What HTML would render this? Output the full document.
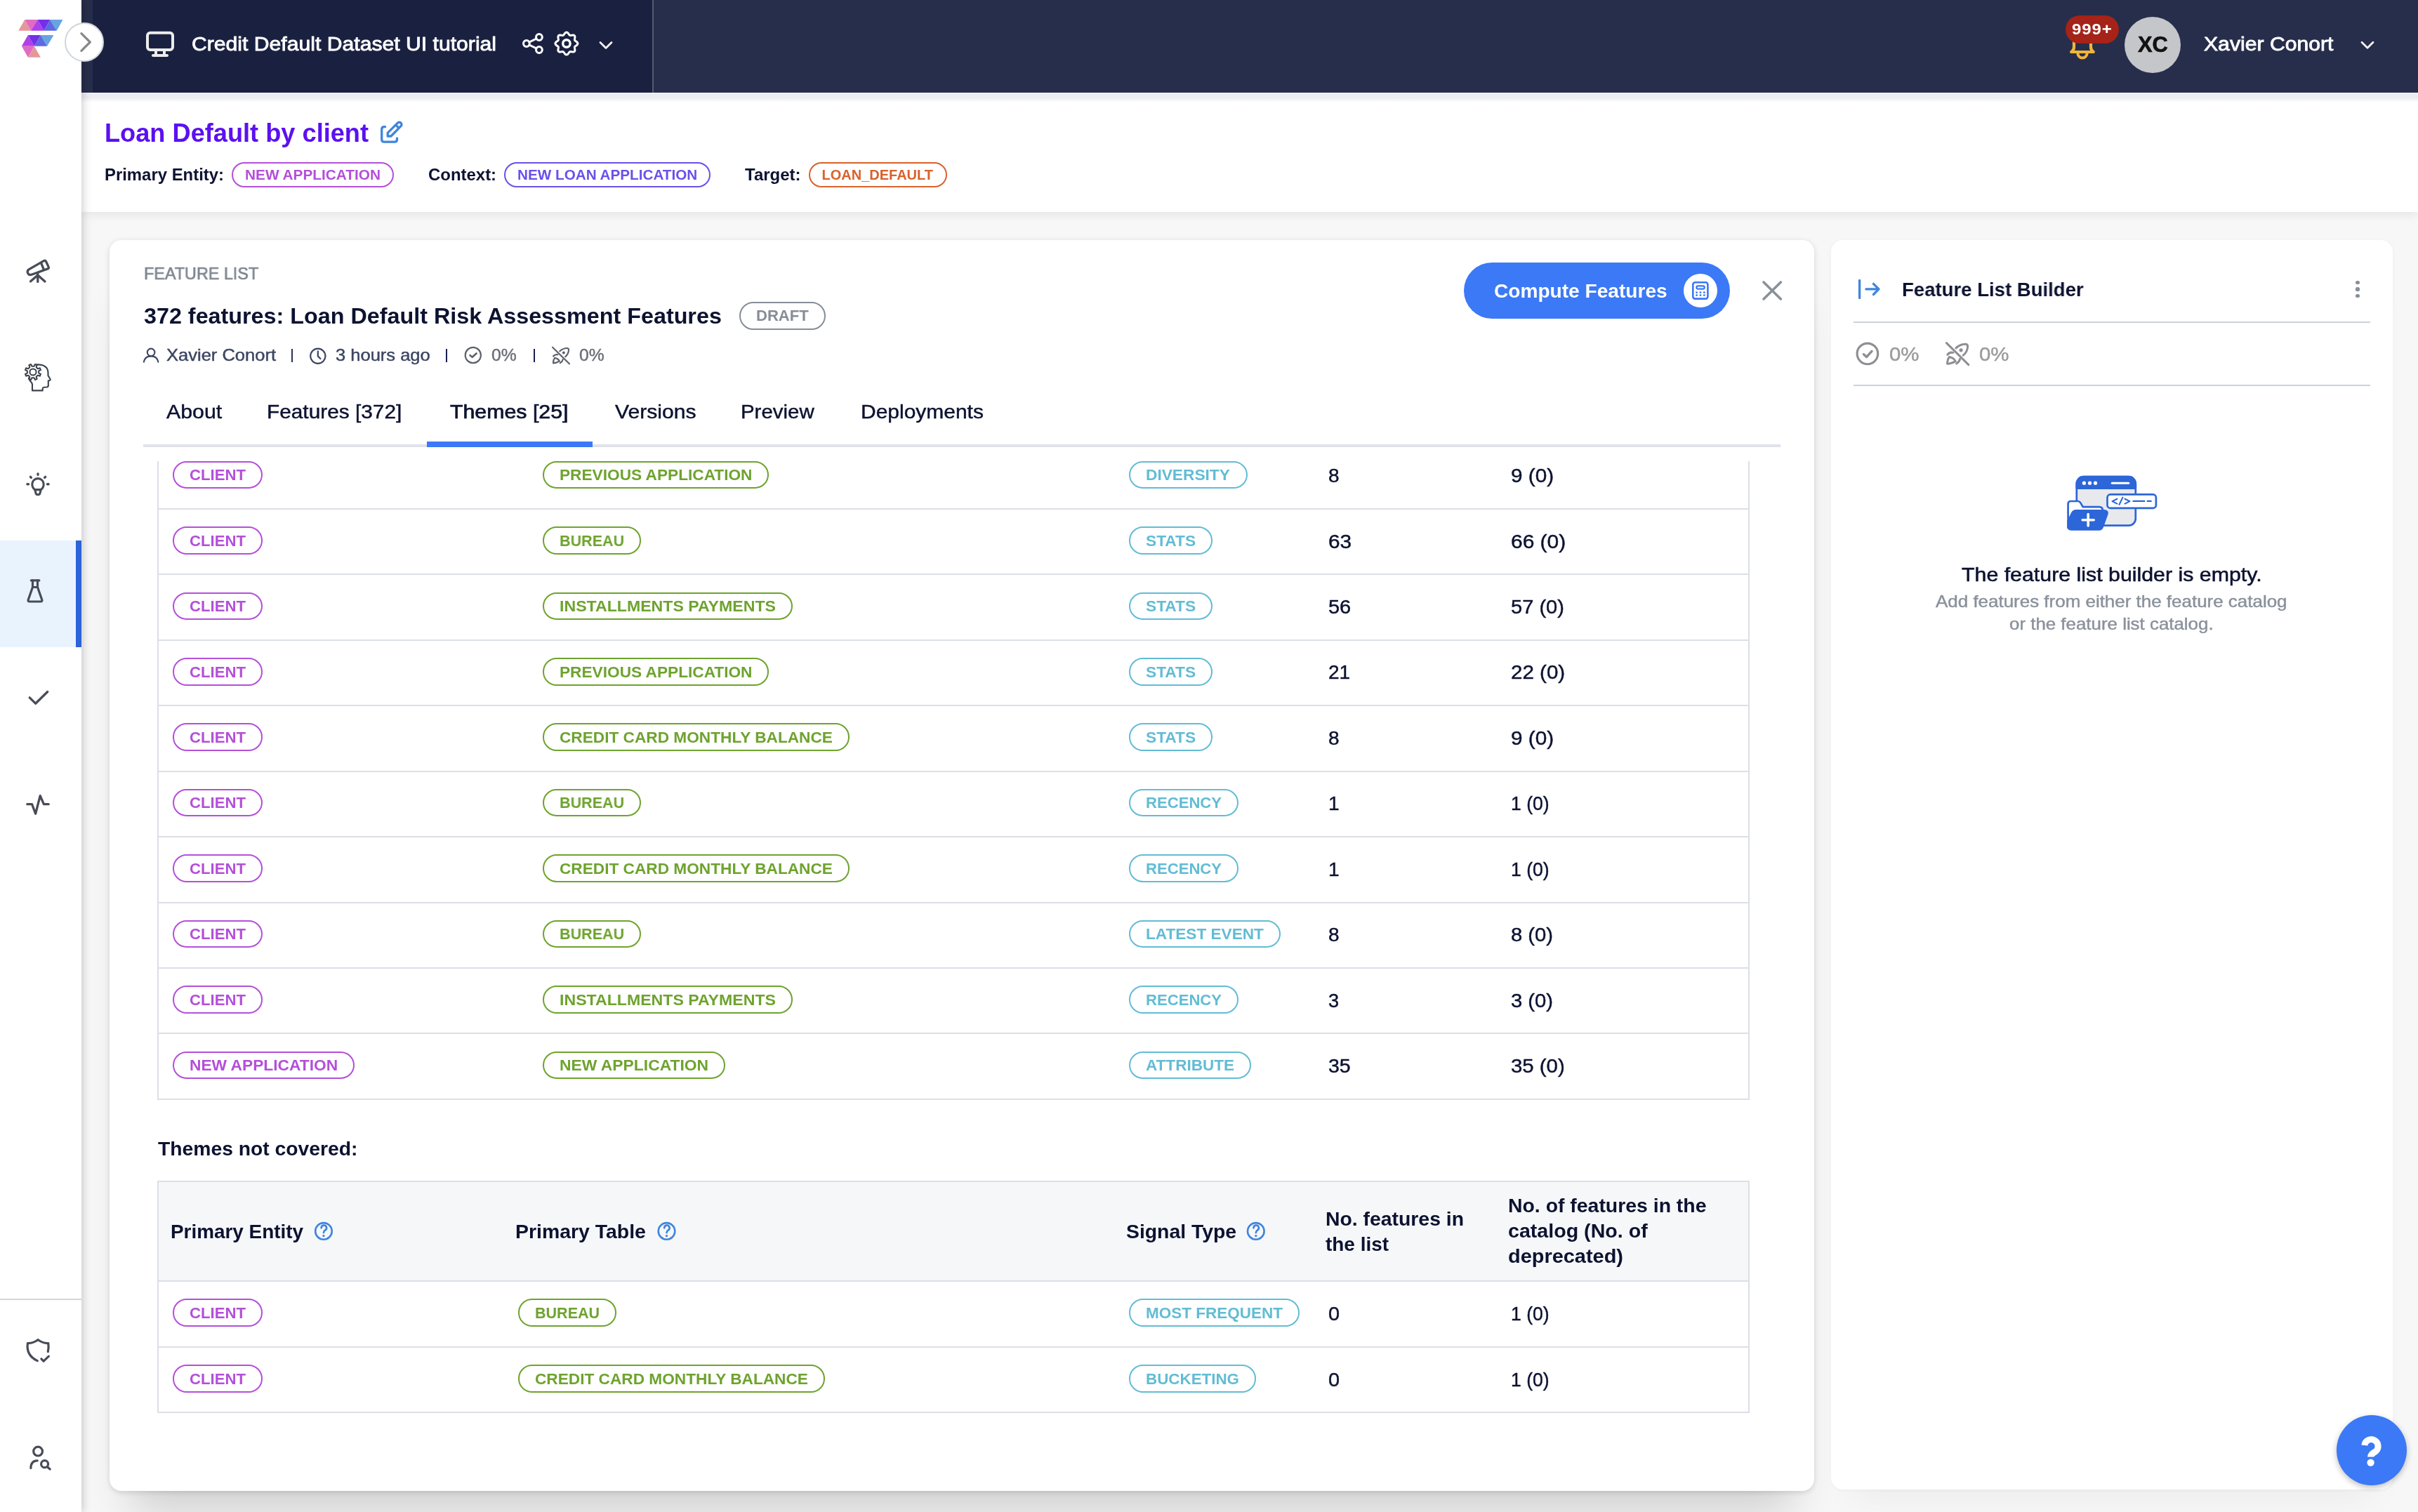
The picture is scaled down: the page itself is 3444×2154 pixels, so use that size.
<!DOCTYPE html>
<html><head><meta charset="utf-8"><title>Feature List</title>
<style>
html,body{margin:0;padding:0;}
body{-webkit-font-smoothing:antialiased;width:3444px;height:2154px;position:relative;overflow:hidden;background:#f7f7f7;font-family:"Liberation Sans",sans-serif;}
.a{position:absolute;}
.t{position:absolute;white-space:nowrap;font-family:"Liberation Sans",sans-serif;}
svg{position:absolute;overflow:visible;}
</style></head><body><div id="root" style="position:absolute;left:0;top:0;width:3444px;height:2154px;will-change:transform;">
<div class="a" style="left:116px;top:132px;width:3328px;height:170px;background:#ffffff;box-shadow:0 4px 14px rgba(0,0,0,0.08);"></div>
<div class="a" style="left:156px;top:342px;width:2428px;height:1782px;background:#ffffff;border-radius:17px;box-shadow:0 60px 60px -30px rgba(0,0,0,0.16),0 2px 8px rgba(0,0,0,0.14);"></div>
<div class="a" style="left:2608px;top:342px;width:800px;height:1780px;background:#ffffff;border-radius:17px;box-shadow:0 40px 50px -30px rgba(0,0,0,0.055),0 1px 6px rgba(0,0,0,0.045);"></div>
<div class="a" style="left:116px;top:132px;width:3328px;height:14px;background:linear-gradient(to bottom,#fafafa 0,#fafafa 1.3px,#ecedf1 1.4px,#ecedf1 7px,#ffffff 14px);"></div>
<div class="a" style="left:116px;top:0px;width:3328px;height:132px;background:#272e4b;"></div>
<div class="a" style="left:132px;top:0px;width:797px;height:132px;background:#1a2140;"></div>
<div class="a" style="left:929px;top:0px;width:2px;height:132px;background:#555a70;"></div>
<span class="t" style="left:273.00px;top:49.30px;font-size:28px;line-height:28px;color:#ffffff;transform:scaleX(1.0769);transform-origin:0 0;-webkit-text-stroke:0.8px #ffffff;">Credit Default Dataset UI tutorial</span>
<div class="a" style="left:3026px;top:24px;width:80px;height:80px;background:#c5c6ca;border-radius:50%;"></div>
<span class="t" style="left:3044.50px;top:47.41px;font-size:32px;line-height:32px;color:#111111;font-weight:700;transform:scaleX(0.9663);transform-origin:0 0;-webkit-text-stroke:0.6px #111111;">XC</span>
<span class="t" style="left:3139.00px;top:49.30px;font-size:28px;line-height:28px;color:#ffffff;transform:scaleX(1.0774);transform-origin:0 0;-webkit-text-stroke:0.8px #ffffff;">Xavier Conort</span>
<div class="a" style="left:0px;top:0px;width:116px;height:2154px;background:#ffffff;box-shadow:2px 0 12px rgba(0,0,0,0.20);"></div>
<div class="a" style="left:0px;top:770px;width:116px;height:152px;background:#e9f3fe;"></div>
<div class="a" style="left:108px;top:770px;width:8px;height:152px;background:#2b63d9;"></div>
<div class="a" style="left:0px;top:1850px;width:116px;height:2px;background:#d3d7dc;"></div>
<div class="a" style="left:92px;top:32px;width:56px;height:56px;background:#ffffff;border-radius:50%;box-sizing:border-box;border:2px solid #cfd5da;"></div>
<span class="t" style="left:149.00px;top:171.53px;font-size:36px;line-height:36px;color:#5b10f0;font-weight:700;transform:scaleX(1.0053);transform-origin:0 0;">Loan Default by client</span>
<span class="t" style="left:149.00px;top:237.18px;font-size:24px;line-height:24px;color:#0c1230;font-weight:700;transform:scaleX(0.9956);transform-origin:0 0;">Primary Entity:</span>
<div class="a" style="left:330px;top:231px;width:231px;height:36px;border:2px solid #b44fd9;border-radius:18.0px;box-sizing:border-box;background:transparent"></div>
<span class="t" style="left:348.60px;top:239.07px;font-size:20px;line-height:20px;color:#b44fd9;font-weight:700;transform:scaleX(1.0404);transform-origin:0 0;">NEW APPLICATION</span>
<span class="t" style="left:609.70px;top:237.18px;font-size:24px;line-height:24px;color:#0c1230;font-weight:700;transform:scaleX(0.9974);transform-origin:0 0;">Context:</span>
<div class="a" style="left:718px;top:231px;width:294px;height:36px;border:2px solid #6b50ea;border-radius:18.0px;box-sizing:border-box;background:transparent"></div>
<span class="t" style="left:736.80px;top:239.07px;font-size:20px;line-height:20px;color:#6b50ea;font-weight:700;transform:scaleX(1.0341);transform-origin:0 0;">NEW LOAN APPLICATION</span>
<span class="t" style="left:1061.00px;top:237.18px;font-size:24px;line-height:24px;color:#0c1230;font-weight:700;">Target:</span>
<div class="a" style="left:1152px;top:231px;width:197px;height:36px;border:2px solid #d9622b;border-radius:18.0px;box-sizing:border-box;background:transparent"></div>
<span class="t" style="left:1170.50px;top:239.07px;font-size:20px;line-height:20px;color:#d9622b;font-weight:700;">LOAN_DEFAULT</span>
<span class="t" style="left:205.00px;top:377.68px;font-size:24px;line-height:24px;color:#7f8792;transform:scaleX(0.9731);transform-origin:0 0;-webkit-text-stroke:0.7px #7f8792;">FEATURE LIST</span>
<span class="t" style="left:205.00px;top:433.91px;font-size:32px;line-height:32px;color:#0c1230;font-weight:700;transform:scaleX(1.0095);transform-origin:0 0;">372 features: Loan Default Risk Assessment Features</span>
<div class="a" style="left:1053px;top:430px;width:123px;height:40px;border:2px solid #868d98;border-radius:20.0px;box-sizing:border-box;background:transparent"></div>
<span class="t" style="left:1077.00px;top:439.38px;font-size:22px;line-height:22px;color:#868d98;font-weight:700;transform:scaleX(1.0027);transform-origin:0 0;">DRAFT</span>
<span class="t" style="left:237.00px;top:493.68px;font-size:24px;line-height:24px;color:#3c4562;transform:scaleX(1.0630);transform-origin:0 0;-webkit-text-stroke:0.45px #3c4562;">Xavier Conort</span>
<span class="t" style="left:478.00px;top:493.68px;font-size:24px;line-height:24px;color:#3c4562;transform:scaleX(1.0627);transform-origin:0 0;-webkit-text-stroke:0.45px #3c4562;">3 hours ago</span>
<span class="t" style="left:700.00px;top:493.68px;font-size:24px;line-height:24px;color:#6b6f78;transform:scaleX(1.0273);transform-origin:0 0;-webkit-text-stroke:0.45px #6b6f78;">0%</span>
<span class="t" style="left:824.60px;top:493.68px;font-size:24px;line-height:24px;color:#6b6f78;transform:scaleX(1.0273);transform-origin:0 0;-webkit-text-stroke:0.45px #6b6f78;">0%</span>
<div class="a" style="left:2085px;top:374px;width:379px;height:80px;background:#3b79f6;border-radius:40px;"></div>
<span class="t" style="left:2128.40px;top:400.50px;font-size:28px;line-height:28px;color:#ffffff;font-weight:700;transform:scaleX(1.0035);transform-origin:0 0;">Compute Features</span>
<div class="a" style="left:2398px;top:390px;width:48px;height:48px;background:#ffffff;border-radius:50%;"></div>
<span class="t" style="left:237.00px;top:573.30px;font-size:28px;line-height:28px;color:#0c1230;transform:scaleX(1.0826);transform-origin:0 0;-webkit-text-stroke:0.45px #0c1230;">About</span>
<span class="t" style="left:379.90px;top:573.30px;font-size:28px;line-height:28px;color:#0c1230;transform:scaleX(1.0648);transform-origin:0 0;-webkit-text-stroke:0.45px #0c1230;">Features [372]</span>
<span class="t" style="left:641.00px;top:573.30px;font-size:28px;line-height:28px;color:#0c1230;transform:scaleX(1.0825);transform-origin:0 0;-webkit-text-stroke:0.7px #0c1230;">Themes [25]</span>
<span class="t" style="left:875.50px;top:573.30px;font-size:28px;line-height:28px;color:#0c1230;transform:scaleX(1.0772);transform-origin:0 0;-webkit-text-stroke:0.45px #0c1230;">Versions</span>
<span class="t" style="left:1054.90px;top:573.30px;font-size:28px;line-height:28px;color:#0c1230;transform:scaleX(1.0506);transform-origin:0 0;-webkit-text-stroke:0.45px #0c1230;">Preview</span>
<span class="t" style="left:1225.80px;top:573.30px;font-size:28px;line-height:28px;color:#0c1230;transform:scaleX(1.0703);transform-origin:0 0;-webkit-text-stroke:0.45px #0c1230;">Deployments</span>
<div class="a" style="left:204px;top:633px;width:2332px;height:4px;background:#dfe2e9;"></div>
<div class="a" style="left:608px;top:629px;width:236px;height:8px;background:#3b79f6;"></div>
<div class="a" style="left:224px;top:657px;width:2px;height:909.8px;background:#dcdfe7;"></div>
<div class="a" style="left:2490px;top:657px;width:2px;height:909.8px;background:#dcdfe7;"></div>
<div class="a" style="left:224px;top:724px;width:2268px;height:2px;background:#dcdfe7;"></div>
<div class="a" style="left:224px;top:817px;width:2268px;height:2px;background:#dcdfe7;"></div>
<div class="a" style="left:224px;top:911px;width:2268px;height:2px;background:#dcdfe7;"></div>
<div class="a" style="left:224px;top:1004px;width:2268px;height:2px;background:#dcdfe7;"></div>
<div class="a" style="left:224px;top:1098px;width:2268px;height:2px;background:#dcdfe7;"></div>
<div class="a" style="left:224px;top:1191px;width:2268px;height:2px;background:#dcdfe7;"></div>
<div class="a" style="left:224px;top:1285px;width:2268px;height:2px;background:#dcdfe7;"></div>
<div class="a" style="left:224px;top:1378px;width:2268px;height:2px;background:#dcdfe7;"></div>
<div class="a" style="left:224px;top:1471px;width:2268px;height:2px;background:#dcdfe7;"></div>
<div class="a" style="left:224px;top:1565px;width:2268px;height:2px;background:#dcdfe7;"></div>
<div class="a" style="left:246.3px;top:656.7px;width:128px;height:39.7px;border:2px solid #b44fd9;border-radius:19.85px;box-sizing:border-box;background:transparent"></div>
<span class="t" style="left:270.20px;top:666.38px;font-size:22px;line-height:22px;color:#b44fd9;font-weight:700;transform:scaleX(1.0063);transform-origin:0 0;">CLIENT</span>
<div class="a" style="left:773.2px;top:656.7px;width:322px;height:39.7px;border:2px solid #6ea32e;border-radius:19.85px;box-sizing:border-box;background:transparent"></div>
<span class="t" style="left:797.40px;top:666.38px;font-size:22px;line-height:22px;color:#6ea32e;font-weight:700;transform:scaleX(1.0300);transform-origin:0 0;">PREVIOUS APPLICATION</span>
<div class="a" style="left:1608.3px;top:656.7px;width:169px;height:39.7px;border:2px solid #62bcd4;border-radius:19.85px;box-sizing:border-box;background:transparent"></div>
<span class="t" style="left:1631.70px;top:666.38px;font-size:22px;line-height:22px;color:#62bcd4;font-weight:700;transform:scaleX(1.0323);transform-origin:0 0;">DIVERSITY</span>
<span class="t" style="left:1892.00px;top:664.20px;font-size:28px;line-height:28px;color:#0c1230;-webkit-text-stroke:0.45px #0c1230;">8</span>
<span class="t" style="left:2152.20px;top:664.20px;font-size:28px;line-height:28px;color:#0c1230;transform:scaleX(1.0609);transform-origin:0 0;-webkit-text-stroke:0.45px #0c1230;">9 (0)</span>
<div class="a" style="left:246.3px;top:750.1px;width:128px;height:39.7px;border:2px solid #b44fd9;border-radius:19.85px;box-sizing:border-box;background:transparent"></div>
<span class="t" style="left:270.20px;top:759.80px;font-size:22px;line-height:22px;color:#b44fd9;font-weight:700;transform:scaleX(1.0063);transform-origin:0 0;">CLIENT</span>
<div class="a" style="left:773.2px;top:750.1px;width:140px;height:39.7px;border:2px solid #6ea32e;border-radius:19.85px;box-sizing:border-box;background:transparent"></div>
<span class="t" style="left:797.40px;top:759.80px;font-size:22px;line-height:22px;color:#6ea32e;font-weight:700;transform:scaleX(0.9787);transform-origin:0 0;">BUREAU</span>
<div class="a" style="left:1608.3px;top:750.1px;width:119px;height:39.7px;border:2px solid #62bcd4;border-radius:19.85px;box-sizing:border-box;background:transparent"></div>
<span class="t" style="left:1631.70px;top:759.80px;font-size:22px;line-height:22px;color:#62bcd4;font-weight:700;transform:scaleX(1.0327);transform-origin:0 0;">STATS</span>
<span class="t" style="left:1892.00px;top:757.62px;font-size:28px;line-height:28px;color:#0c1230;transform:scaleX(1.0624);transform-origin:0 0;-webkit-text-stroke:0.45px #0c1230;">63</span>
<span class="t" style="left:2152.20px;top:757.62px;font-size:28px;line-height:28px;color:#0c1230;transform:scaleX(1.0689);transform-origin:0 0;-webkit-text-stroke:0.45px #0c1230;">66 (0)</span>
<div class="a" style="left:246.3px;top:843.5px;width:128px;height:39.7px;border:2px solid #b44fd9;border-radius:19.85px;box-sizing:border-box;background:transparent"></div>
<span class="t" style="left:270.20px;top:853.22px;font-size:22px;line-height:22px;color:#b44fd9;font-weight:700;transform:scaleX(1.0063);transform-origin:0 0;">CLIENT</span>
<div class="a" style="left:773.2px;top:843.5px;width:356px;height:39.7px;border:2px solid #6ea32e;border-radius:19.85px;box-sizing:border-box;background:transparent"></div>
<span class="t" style="left:797.40px;top:853.22px;font-size:22px;line-height:22px;color:#6ea32e;font-weight:700;transform:scaleX(1.0512);transform-origin:0 0;">INSTALLMENTS PAYMENTS</span>
<div class="a" style="left:1608.3px;top:843.5px;width:119px;height:39.7px;border:2px solid #62bcd4;border-radius:19.85px;box-sizing:border-box;background:transparent"></div>
<span class="t" style="left:1631.70px;top:853.22px;font-size:22px;line-height:22px;color:#62bcd4;font-weight:700;transform:scaleX(1.0327);transform-origin:0 0;">STATS</span>
<span class="t" style="left:1892.00px;top:851.04px;font-size:28px;line-height:28px;color:#0c1230;transform:scaleX(1.0336);transform-origin:0 0;-webkit-text-stroke:0.45px #0c1230;">56</span>
<span class="t" style="left:2152.20px;top:851.04px;font-size:28px;line-height:28px;color:#0c1230;transform:scaleX(1.0375);transform-origin:0 0;-webkit-text-stroke:0.45px #0c1230;">57 (0)</span>
<div class="a" style="left:246.3px;top:937.0px;width:128px;height:39.7px;border:2px solid #b44fd9;border-radius:19.85px;box-sizing:border-box;background:transparent"></div>
<span class="t" style="left:270.20px;top:946.64px;font-size:22px;line-height:22px;color:#b44fd9;font-weight:700;transform:scaleX(1.0063);transform-origin:0 0;">CLIENT</span>
<div class="a" style="left:773.2px;top:937.0px;width:322px;height:39.7px;border:2px solid #6ea32e;border-radius:19.85px;box-sizing:border-box;background:transparent"></div>
<span class="t" style="left:797.40px;top:946.64px;font-size:22px;line-height:22px;color:#6ea32e;font-weight:700;transform:scaleX(1.0300);transform-origin:0 0;">PREVIOUS APPLICATION</span>
<div class="a" style="left:1608.3px;top:937.0px;width:119px;height:39.7px;border:2px solid #62bcd4;border-radius:19.85px;box-sizing:border-box;background:transparent"></div>
<span class="t" style="left:1631.70px;top:946.64px;font-size:22px;line-height:22px;color:#62bcd4;font-weight:700;transform:scaleX(1.0327);transform-origin:0 0;">STATS</span>
<span class="t" style="left:1892.00px;top:944.46px;font-size:28px;line-height:28px;color:#0c1230;-webkit-text-stroke:0.45px #0c1230;">21</span>
<span class="t" style="left:2152.20px;top:944.46px;font-size:28px;line-height:28px;color:#0c1230;transform:scaleX(1.0553);transform-origin:0 0;-webkit-text-stroke:0.45px #0c1230;">22 (0)</span>
<div class="a" style="left:246.3px;top:1030.4px;width:128px;height:39.7px;border:2px solid #b44fd9;border-radius:19.85px;box-sizing:border-box;background:transparent"></div>
<span class="t" style="left:270.20px;top:1040.06px;font-size:22px;line-height:22px;color:#b44fd9;font-weight:700;transform:scaleX(1.0063);transform-origin:0 0;">CLIENT</span>
<div class="a" style="left:773.2px;top:1030.4px;width:437px;height:39.7px;border:2px solid #6ea32e;border-radius:19.85px;box-sizing:border-box;background:transparent"></div>
<span class="t" style="left:797.40px;top:1040.06px;font-size:22px;line-height:22px;color:#6ea32e;font-weight:700;transform:scaleX(1.0298);transform-origin:0 0;">CREDIT CARD MONTHLY BALANCE</span>
<div class="a" style="left:1608.3px;top:1030.4px;width:119px;height:39.7px;border:2px solid #62bcd4;border-radius:19.85px;box-sizing:border-box;background:transparent"></div>
<span class="t" style="left:1631.70px;top:1040.06px;font-size:22px;line-height:22px;color:#62bcd4;font-weight:700;transform:scaleX(1.0327);transform-origin:0 0;">STATS</span>
<span class="t" style="left:1892.00px;top:1037.88px;font-size:28px;line-height:28px;color:#0c1230;-webkit-text-stroke:0.45px #0c1230;">8</span>
<span class="t" style="left:2152.20px;top:1037.88px;font-size:28px;line-height:28px;color:#0c1230;transform:scaleX(1.0609);transform-origin:0 0;-webkit-text-stroke:0.45px #0c1230;">9 (0)</span>
<div class="a" style="left:246.3px;top:1123.8px;width:128px;height:39.7px;border:2px solid #b44fd9;border-radius:19.85px;box-sizing:border-box;background:transparent"></div>
<span class="t" style="left:270.20px;top:1133.48px;font-size:22px;line-height:22px;color:#b44fd9;font-weight:700;transform:scaleX(1.0063);transform-origin:0 0;">CLIENT</span>
<div class="a" style="left:773.2px;top:1123.8px;width:140px;height:39.7px;border:2px solid #6ea32e;border-radius:19.85px;box-sizing:border-box;background:transparent"></div>
<span class="t" style="left:797.40px;top:1133.48px;font-size:22px;line-height:22px;color:#6ea32e;font-weight:700;transform:scaleX(0.9787);transform-origin:0 0;">BUREAU</span>
<div class="a" style="left:1608.3px;top:1123.8px;width:156px;height:39.7px;border:2px solid #62bcd4;border-radius:19.85px;box-sizing:border-box;background:transparent"></div>
<span class="t" style="left:1631.70px;top:1133.48px;font-size:22px;line-height:22px;color:#62bcd4;font-weight:700;transform:scaleX(1.0047);transform-origin:0 0;">RECENCY</span>
<span class="t" style="left:1892.00px;top:1131.30px;font-size:28px;line-height:28px;color:#0c1230;-webkit-text-stroke:0.45px #0c1230;">1</span>
<span class="t" style="left:2152.20px;top:1131.30px;font-size:28px;line-height:28px;color:#0c1230;transform:scaleX(0.9478);transform-origin:0 0;-webkit-text-stroke:0.45px #0c1230;">1 (0)</span>
<div class="a" style="left:246.3px;top:1217.2px;width:128px;height:39.7px;border:2px solid #b44fd9;border-radius:19.85px;box-sizing:border-box;background:transparent"></div>
<span class="t" style="left:270.20px;top:1226.90px;font-size:22px;line-height:22px;color:#b44fd9;font-weight:700;transform:scaleX(1.0063);transform-origin:0 0;">CLIENT</span>
<div class="a" style="left:773.2px;top:1217.2px;width:437px;height:39.7px;border:2px solid #6ea32e;border-radius:19.85px;box-sizing:border-box;background:transparent"></div>
<span class="t" style="left:797.40px;top:1226.90px;font-size:22px;line-height:22px;color:#6ea32e;font-weight:700;transform:scaleX(1.0298);transform-origin:0 0;">CREDIT CARD MONTHLY BALANCE</span>
<div class="a" style="left:1608.3px;top:1217.2px;width:156px;height:39.7px;border:2px solid #62bcd4;border-radius:19.85px;box-sizing:border-box;background:transparent"></div>
<span class="t" style="left:1631.70px;top:1226.90px;font-size:22px;line-height:22px;color:#62bcd4;font-weight:700;transform:scaleX(1.0047);transform-origin:0 0;">RECENCY</span>
<span class="t" style="left:1892.00px;top:1224.72px;font-size:28px;line-height:28px;color:#0c1230;-webkit-text-stroke:0.45px #0c1230;">1</span>
<span class="t" style="left:2152.20px;top:1224.72px;font-size:28px;line-height:28px;color:#0c1230;transform:scaleX(0.9478);transform-origin:0 0;-webkit-text-stroke:0.45px #0c1230;">1 (0)</span>
<div class="a" style="left:246.3px;top:1310.6px;width:128px;height:39.7px;border:2px solid #b44fd9;border-radius:19.85px;box-sizing:border-box;background:transparent"></div>
<span class="t" style="left:270.20px;top:1320.32px;font-size:22px;line-height:22px;color:#b44fd9;font-weight:700;transform:scaleX(1.0063);transform-origin:0 0;">CLIENT</span>
<div class="a" style="left:773.2px;top:1310.6px;width:140px;height:39.7px;border:2px solid #6ea32e;border-radius:19.85px;box-sizing:border-box;background:transparent"></div>
<span class="t" style="left:797.40px;top:1320.32px;font-size:22px;line-height:22px;color:#6ea32e;font-weight:700;transform:scaleX(0.9787);transform-origin:0 0;">BUREAU</span>
<div class="a" style="left:1608.3px;top:1310.6px;width:216px;height:39.7px;border:2px solid #62bcd4;border-radius:19.85px;box-sizing:border-box;background:transparent"></div>
<span class="t" style="left:1631.70px;top:1320.32px;font-size:22px;line-height:22px;color:#62bcd4;font-weight:700;transform:scaleX(1.0275);transform-origin:0 0;">LATEST EVENT</span>
<span class="t" style="left:1892.00px;top:1318.14px;font-size:28px;line-height:28px;color:#0c1230;-webkit-text-stroke:0.45px #0c1230;">8</span>
<span class="t" style="left:2152.20px;top:1318.14px;font-size:28px;line-height:28px;color:#0c1230;transform:scaleX(1.0435);transform-origin:0 0;-webkit-text-stroke:0.45px #0c1230;">8 (0)</span>
<div class="a" style="left:246.3px;top:1404.1px;width:128px;height:39.7px;border:2px solid #b44fd9;border-radius:19.85px;box-sizing:border-box;background:transparent"></div>
<span class="t" style="left:270.20px;top:1413.74px;font-size:22px;line-height:22px;color:#b44fd9;font-weight:700;transform:scaleX(1.0063);transform-origin:0 0;">CLIENT</span>
<div class="a" style="left:773.2px;top:1404.1px;width:356px;height:39.7px;border:2px solid #6ea32e;border-radius:19.85px;box-sizing:border-box;background:transparent"></div>
<span class="t" style="left:797.40px;top:1413.74px;font-size:22px;line-height:22px;color:#6ea32e;font-weight:700;transform:scaleX(1.0512);transform-origin:0 0;">INSTALLMENTS PAYMENTS</span>
<div class="a" style="left:1608.3px;top:1404.1px;width:156px;height:39.7px;border:2px solid #62bcd4;border-radius:19.85px;box-sizing:border-box;background:transparent"></div>
<span class="t" style="left:1631.70px;top:1413.74px;font-size:22px;line-height:22px;color:#62bcd4;font-weight:700;transform:scaleX(1.0047);transform-origin:0 0;">RECENCY</span>
<span class="t" style="left:1892.00px;top:1411.56px;font-size:28px;line-height:28px;color:#0c1230;transform:scaleX(0.9677);transform-origin:0 0;-webkit-text-stroke:0.45px #0c1230;">3</span>
<span class="t" style="left:2152.20px;top:1411.56px;font-size:28px;line-height:28px;color:#0c1230;transform:scaleX(1.0435);transform-origin:0 0;-webkit-text-stroke:0.45px #0c1230;">3 (0)</span>
<div class="a" style="left:246.3px;top:1497.5px;width:259px;height:39.7px;border:2px solid #b44fd9;border-radius:19.85px;box-sizing:border-box;background:transparent"></div>
<span class="t" style="left:270.20px;top:1507.16px;font-size:22px;line-height:22px;color:#b44fd9;font-weight:700;transform:scaleX(1.0343);transform-origin:0 0;">NEW APPLICATION</span>
<div class="a" style="left:773.2px;top:1497.5px;width:260px;height:39.7px;border:2px solid #6ea32e;border-radius:19.85px;box-sizing:border-box;background:transparent"></div>
<span class="t" style="left:797.40px;top:1507.16px;font-size:22px;line-height:22px;color:#6ea32e;font-weight:700;transform:scaleX(1.0392);transform-origin:0 0;">NEW APPLICATION</span>
<div class="a" style="left:1608.3px;top:1497.5px;width:174px;height:39.7px;border:2px solid #62bcd4;border-radius:19.85px;box-sizing:border-box;background:transparent"></div>
<span class="t" style="left:1631.70px;top:1507.16px;font-size:22px;line-height:22px;color:#62bcd4;font-weight:700;transform:scaleX(1.0244);transform-origin:0 0;">ATTRIBUTE</span>
<span class="t" style="left:1892.00px;top:1504.98px;font-size:28px;line-height:28px;color:#0c1230;transform:scaleX(1.0176);transform-origin:0 0;-webkit-text-stroke:0.45px #0c1230;">35</span>
<span class="t" style="left:2152.20px;top:1504.98px;font-size:28px;line-height:28px;color:#0c1230;transform:scaleX(1.0485);transform-origin:0 0;-webkit-text-stroke:0.45px #0c1230;">35 (0)</span>
<span class="t" style="left:225.00px;top:1622.60px;font-size:28px;line-height:28px;color:#0c1230;font-weight:700;transform:scaleX(1.0098);transform-origin:0 0;">Themes not covered:</span>
<div class="a" style="left:224px;top:1682px;width:2268px;height:331px;background:#dcdfe7;"></div>
<div class="a" style="left:226px;top:1684px;width:2264px;height:140px;background:#f6f7f9;"></div>
<div class="a" style="left:226px;top:1826px;width:2264px;height:92px;background:#ffffff;"></div>
<div class="a" style="left:226px;top:1920px;width:2264px;height:91px;background:#ffffff;"></div>
<span class="t" style="left:243.00px;top:1740.90px;font-size:28px;line-height:28px;color:#0c1230;font-weight:700;transform:scaleX(0.9960);transform-origin:0 0;">Primary Entity</span>
<span class="t" style="left:734.00px;top:1740.90px;font-size:28px;line-height:28px;color:#0c1230;font-weight:700;transform:scaleX(1.0150);transform-origin:0 0;">Primary Table</span>
<span class="t" style="left:1604.00px;top:1740.90px;font-size:28px;line-height:28px;color:#0c1230;font-weight:700;transform:scaleX(1.0129);transform-origin:0 0;">Signal Type</span>
<span class="t" style="left:1887.50px;top:1722.80px;font-size:28px;line-height:28px;color:#0c1230;font-weight:700;transform:scaleX(1.0129);transform-origin:0 0;">No. features in</span>
<span class="t" style="left:1887.50px;top:1758.80px;font-size:28px;line-height:28px;color:#0c1230;font-weight:700;transform:scaleX(0.9972);transform-origin:0 0;">the list</span>
<span class="t" style="left:2147.50px;top:1704.30px;font-size:28px;line-height:28px;color:#0c1230;font-weight:700;transform:scaleX(1.0144);transform-origin:0 0;">No. of features in the</span>
<span class="t" style="left:2147.50px;top:1740.30px;font-size:28px;line-height:28px;color:#0c1230;font-weight:700;transform:scaleX(1.0218);transform-origin:0 0;">catalog (No. of</span>
<span class="t" style="left:2147.50px;top:1776.30px;font-size:28px;line-height:28px;color:#0c1230;font-weight:700;transform:scaleX(1.0331);transform-origin:0 0;">deprecated)</span>
<div class="a" style="left:246.3px;top:1850.0px;width:128px;height:39.7px;border:2px solid #b44fd9;border-radius:19.85px;box-sizing:border-box;background:transparent"></div>
<span class="t" style="left:270.20px;top:1859.68px;font-size:22px;line-height:22px;color:#b44fd9;font-weight:700;transform:scaleX(1.0063);transform-origin:0 0;">CLIENT</span>
<div class="a" style="left:738.2px;top:1850.0px;width:140px;height:39.7px;border:2px solid #6ea32e;border-radius:19.85px;box-sizing:border-box;background:transparent"></div>
<span class="t" style="left:762.40px;top:1859.68px;font-size:22px;line-height:22px;color:#6ea32e;font-weight:700;transform:scaleX(0.9787);transform-origin:0 0;">BUREAU</span>
<div class="a" style="left:1608.3px;top:1850.0px;width:243px;height:39.7px;border:2px solid #62bcd4;border-radius:19.85px;box-sizing:border-box;background:transparent"></div>
<span class="t" style="left:1631.70px;top:1859.68px;font-size:22px;line-height:22px;color:#62bcd4;font-weight:700;transform:scaleX(1.0223);transform-origin:0 0;">MOST FREQUENT</span>
<span class="t" style="left:1892.00px;top:1857.50px;font-size:28px;line-height:28px;color:#0c1230;transform:scaleX(1.0323);transform-origin:0 0;-webkit-text-stroke:0.45px #0c1230;">0</span>
<span class="t" style="left:2152.20px;top:1857.50px;font-size:28px;line-height:28px;color:#0c1230;transform:scaleX(0.9478);transform-origin:0 0;-webkit-text-stroke:0.45px #0c1230;">1 (0)</span>
<div class="a" style="left:246.3px;top:1944.0px;width:128px;height:39.7px;border:2px solid #b44fd9;border-radius:19.85px;box-sizing:border-box;background:transparent"></div>
<span class="t" style="left:270.20px;top:1953.68px;font-size:22px;line-height:22px;color:#b44fd9;font-weight:700;transform:scaleX(1.0063);transform-origin:0 0;">CLIENT</span>
<div class="a" style="left:738.2px;top:1944.0px;width:437px;height:39.7px;border:2px solid #6ea32e;border-radius:19.85px;box-sizing:border-box;background:transparent"></div>
<span class="t" style="left:762.40px;top:1953.68px;font-size:22px;line-height:22px;color:#6ea32e;font-weight:700;transform:scaleX(1.0298);transform-origin:0 0;">CREDIT CARD MONTHLY BALANCE</span>
<div class="a" style="left:1608.3px;top:1944.0px;width:181px;height:39.7px;border:2px solid #62bcd4;border-radius:19.85px;box-sizing:border-box;background:transparent"></div>
<span class="t" style="left:1631.70px;top:1953.68px;font-size:22px;line-height:22px;color:#62bcd4;font-weight:700;transform:scaleX(1.0172);transform-origin:0 0;">BUCKETING</span>
<span class="t" style="left:1892.00px;top:1951.50px;font-size:28px;line-height:28px;color:#0c1230;transform:scaleX(1.0323);transform-origin:0 0;-webkit-text-stroke:0.45px #0c1230;">0</span>
<span class="t" style="left:2152.20px;top:1951.50px;font-size:28px;line-height:28px;color:#0c1230;transform:scaleX(0.9478);transform-origin:0 0;-webkit-text-stroke:0.45px #0c1230;">1 (0)</span>
<span class="t" style="left:2709.00px;top:398.80px;font-size:28px;line-height:28px;color:#0c1230;font-weight:700;transform:scaleX(0.9837);transform-origin:0 0;">Feature List Builder</span>
<div class="a" style="left:2640px;top:458px;width:736px;height:2px;background:#cbd2da;"></div>
<div class="a" style="left:2640px;top:548px;width:736px;height:2px;background:#cbd2da;"></div>
<span class="t" style="left:2691.00px;top:490.80px;font-size:28px;line-height:28px;color:#9b9b9b;transform:scaleX(1.0494);transform-origin:0 0;-webkit-text-stroke:0.45px #9b9b9b;">0%</span>
<span class="t" style="left:2819.00px;top:490.80px;font-size:28px;line-height:28px;color:#9b9b9b;transform:scaleX(1.0494);transform-origin:0 0;-webkit-text-stroke:0.45px #9b9b9b;">0%</span>
<div class="a" style="left:3355.4px;top:400.0px;width:5.2px;height:5.2px;background:#868e99;border-radius:50%;"></div>
<div class="a" style="left:3355.4px;top:409.4px;width:5.2px;height:5.2px;background:#868e99;border-radius:50%;"></div>
<div class="a" style="left:3355.4px;top:418.79999999999995px;width:5.2px;height:5.2px;background:#868e99;border-radius:50%;"></div>
<span class="t" style="left:2793.60px;top:805.00px;font-size:28px;line-height:28px;color:#0c1230;transform:scaleX(1.0832);transform-origin:0 0;-webkit-text-stroke:0.55px #0c1230;">The feature list builder is empty.</span>
<span class="t" style="left:2757.40px;top:844.68px;font-size:24px;line-height:24px;color:#8a919b;transform:scaleX(1.0812);transform-origin:0 0;-webkit-text-stroke:0.45px #8a919b;">Add features from either the feature catalog</span>
<span class="t" style="left:2862.40px;top:876.68px;font-size:24px;line-height:24px;color:#8a919b;transform:scaleX(1.0783);transform-origin:0 0;-webkit-text-stroke:0.45px #8a919b;">or the feature list catalog.</span>
<div class="a" style="left:3328px;top:2016px;width:100px;height:100px;background:#3b79f6;border-radius:50%;box-shadow:0 3px 8px rgba(0,0,0,0.26);"></div>
<div class="a" style="left:415px;top:496.5px;width:2px;height:19px;background:#2b3355;"></div>
<div class="a" style="left:635px;top:496.5px;width:2px;height:19px;background:#1a2050;"></div>
<div class="a" style="left:760px;top:496.5px;width:2px;height:19px;background:#1a2050;"></div>
<svg width="3444" height="2154" viewBox="0 0 3444 2154" style="left:0;top:0;pointer-events:none;" fill="none" stroke-linecap="round" stroke-linejoin="round"><polygon points="35.23,28.10 26.24,43.73 43.92,43.73" fill="#e4989a" stroke="none"/><polygon points="35.23,28.10 53.53,28.10 43.92,43.73" fill="#e06bc3" stroke="none"/><polygon points="53.53,28.10 43.92,43.73 62.53,43.73" fill="#b040e8" stroke="none"/><polygon points="53.53,28.10 71.52,28.10 62.53,43.73" fill="#7330e8" stroke="none"/><polygon points="71.52,28.10 62.53,43.73 80.83,43.73" fill="#5d6ae0" stroke="none"/><polygon points="71.52,28.10 89.51,28.10 80.83,43.73" fill="#67a4e0" stroke="none"/><polygon points="39.88,50.00 30.89,65.81 48.88,65.81" fill="#b040e8" stroke="none"/><polygon points="39.88,50.00 58.18,50.00 48.88,65.81" fill="#7330e8" stroke="none"/><polygon points="58.18,50.00 48.88,65.81 67.18,65.81" fill="#5d6ae0" stroke="none"/><polygon points="58.18,50.00 76.48,50.00 67.18,65.81" fill="#67a4e0" stroke="none"/><polygon points="30.89,65.81 48.88,65.81 39.88,81.76" fill="#e06bc3" stroke="none"/><polygon points="48.88,65.81 39.88,81.76 57.87,81.76" fill="#e4989a" stroke="none"/><path d="M115.9,47.6 L128.3,60 L115.9,72.4" stroke="#888888" stroke-width="3.2" fill="none" /><rect x="210" y="46.8" width="36" height="24.2" rx="4" stroke="#ececec" stroke-width="4"/><path d="M222,73 V79 M234,73 V79" stroke="#ececec" stroke-width="4" fill="none" stroke-linecap="butt"/><path d="M218,79 H238" stroke="#ececec" stroke-width="4" fill="none" /><circle cx="749.9" cy="62" r="4.4" stroke="#ffffff" stroke-width="3" fill="none"/><circle cx="767.9" cy="53" r="4.4" stroke="#ffffff" stroke-width="3" fill="none"/><circle cx="767.9" cy="71" r="4.4" stroke="#ffffff" stroke-width="3" fill="none"/><path d="M753.9,60 L763.9,55 M753.9,64 L763.9,69" stroke="#ffffff" stroke-width="3" fill="none" /><path d="M806.90,46.00 L807.73,46.17 L808.51,46.65 L809.22,47.36 L809.84,48.19 L810.38,49.01 L810.89,49.71 L811.43,50.20 L812.04,50.46 L812.77,50.48 L813.62,50.35 L814.59,50.16 L815.61,50.01 L816.62,50.00 L817.51,50.22 L818.21,50.69 L818.68,51.39 L818.90,52.28 L818.89,53.29 L818.74,54.31 L818.55,55.27 L818.42,56.13 L818.44,56.86 L818.70,57.47 L819.19,58.01 L819.89,58.52 L820.71,59.06 L821.54,59.68 L822.25,60.39 L822.73,61.17 L822.90,62.00 L822.73,62.83 L822.25,63.61 L821.54,64.32 L820.71,64.94 L819.89,65.48 L819.19,65.99 L818.70,66.53 L818.44,67.14 L818.42,67.87 L818.55,68.72 L818.74,69.69 L818.89,70.71 L818.90,71.72 L818.68,72.61 L818.21,73.31 L817.51,73.78 L816.62,74.00 L815.61,73.99 L814.59,73.84 L813.62,73.65 L812.77,73.52 L812.04,73.54 L811.43,73.80 L810.89,74.29 L810.38,74.99 L809.84,75.81 L809.22,76.64 L808.51,77.35 L807.73,77.83 L806.90,78.00 L806.07,77.83 L805.29,77.35 L804.58,76.64 L803.96,75.81 L803.42,74.99 L802.91,74.29 L802.37,73.80 L801.76,73.54 L801.03,73.52 L800.17,73.65 L799.21,73.84 L798.19,73.99 L797.18,74.00 L796.29,73.78 L795.59,73.31 L795.12,72.61 L794.90,71.72 L794.91,70.71 L795.06,69.69 L795.25,68.73 L795.38,67.87 L795.36,67.14 L795.10,66.53 L794.61,65.99 L793.91,65.48 L793.09,64.94 L792.26,64.32 L791.55,63.61 L791.07,62.83 L790.90,62.00 L791.07,61.17 L791.55,60.39 L792.26,59.68 L793.09,59.06 L793.91,58.52 L794.61,58.01 L795.10,57.47 L795.36,56.86 L795.38,56.13 L795.25,55.27 L795.06,54.31 L794.91,53.29 L794.90,52.28 L795.12,51.39 L795.59,50.69 L796.29,50.22 L797.18,50.00 L798.19,50.01 L799.21,50.16 L800.17,50.35 L801.03,50.48 L801.76,50.46 L802.37,50.20 L802.91,49.71 L803.42,49.01 L803.96,48.19 L804.58,47.36 L805.29,46.65 L806.07,46.17 L806.90,46.00 Z" stroke="#ffffff" stroke-width="3" fill="none" /><circle cx="806.9" cy="62" r="5.2" stroke="#ffffff" stroke-width="3.4" fill="none"/><path d="M855,60.4 L863,68.4 L871,60.4" stroke="#f2f2f2" stroke-width="2.8" fill="none" /><path d="M3364,60.2 L3372,68.2 L3380,60.2" stroke="#f2f2f2" stroke-width="2.8" fill="none" /><path d="M2954,56 V67 Q2954,71.5 2950.2,74 H2981.8 Q2978,71.5 2978,67 V56" stroke="#f0b53a" stroke-width="4.2" fill="none" /><path d="M2959.4,76 a6.6,6.6 0 0 0 13.2,0" stroke="#f0b53a" stroke-width="4" fill="none" /><path d="M41.5,383.6 L62.3,371.6 Q64.6,370.6 65.7,372.8 L69.2,380.4 Q69.8,382.2 68,382.9 L45,391.2 Q41,392.4 39.4,388.6 Q38.4,385.4 41.5,383.6 Z" stroke="#484c57" stroke-width="3.3" fill="none" /><path d="M58.6,374.6 L62.2,383.6" stroke="#484c57" stroke-width="3.3" fill="none" /><path d="M53.8,389 V401.4 M53.8,392 L43.6,400.8 M53.8,392 L64,401" stroke="#484c57" stroke-width="3.3" fill="none" /><path d="M49.8,519.6 Q55,519 59.7,520 Q66,522 67.7,526.5 Q69,530 68.5,535 L71.5,540 Q72.2,541.6 70.5,542 L68.8,542.3 V549 Q68.8,551.3 66.5,551.5 L62.5,551.7 Q60.8,552 60.7,553.5 V556.4 H46 V547.5 Q45.8,546 44.5,544.5 Q41.5,541.5 40.8,538.5" stroke="#3b414c" stroke-width="2.1" fill="none" /><path d="M42.36,523.12 L41.31,520.12 L44.04,518.99 L45.41,521.85 L46.02,521.86 L47.98,521.86 L48.59,521.85 L49.96,518.99 L52.69,520.12 L51.64,523.12 L52.06,523.55 L53.45,524.94 L53.88,525.36 L56.88,524.31 L58.01,527.04 L55.15,528.41 L55.14,529.02 L55.14,530.98 L55.15,531.59 L58.01,532.96 L56.88,535.69 L53.88,534.64 L53.45,535.06 L52.06,536.45 L51.64,536.88 L52.69,539.88 L49.96,541.01 L48.59,538.15 L47.98,538.14 L46.02,538.14 L45.41,538.15 L44.04,541.01 L41.31,539.88 L42.36,536.88 L41.94,536.45 L40.55,535.06 L40.12,534.64 L37.12,535.69 L35.99,532.96 L38.85,531.59 L38.86,530.98 L38.86,529.02 L38.85,528.41 L35.99,527.04 L37.12,524.31 L40.12,525.36 L40.55,524.94 L41.94,523.55 Z" stroke="#3b414c" stroke-width="2.0" fill="#ffffff" /><circle cx="47" cy="530" r="4.6" stroke="#3b414c" stroke-width="2.0" fill="none"/><path d="M49.6,697.6 Q45.8,694.5 45.8,689.8 A8.2,8.2 0 1 1 62.2,689.8 Q62.2,694.5 58.4,697.6 Z" stroke="#484c57" stroke-width="3.1" fill="none" /><path d="M49.8,697.8 L51.2,703.2 Q51.6,704.8 54,704.8 Q56.4,704.8 56.8,703.2 L58.2,697.8" stroke="#484c57" stroke-width="3.1" fill="none" /><path d="M54,675 V676.3 M43.4,679.4 L44.4,680.4 M64.6,679.4 L63.6,680.4 M38.9,689.8 H40.5 M67.5,689.8 H69.1" stroke="#484c57" stroke-width="3.4" fill="none" /><path d="M44.4,826.9 H55.8" stroke="#484c57" stroke-width="3.3" fill="none" /><path d="M46.5,826.9 V836.4 L40.2,854.6 Q39.4,857 42,857 H58 Q60.6,857 59.8,854.6 L53.5,836.4 V826.9 M46.5,836.5 H53.5" stroke="#484c57" stroke-width="3.2" fill="none" /><path d="M42.2,993.8 L50.6,1002.2 L67.7,985.5" stroke="#484c57" stroke-width="3.3" fill="none" /><path d="M38.8,1145.7 H45.6 L50.6,1159.3 L57.2,1133.6 L62.4,1145.7 H69.2" stroke="#484c57" stroke-width="3.3" fill="none" /><path d="M54.1,1908.8 Q46.5,1914 39.4,1913.6 Q37,1931 53.3,1938.6" stroke="#484c57" stroke-width="3.2" fill="none" /><path d="M54.1,1908.8 Q61.7,1914 68.8,1913.6 Q69.6,1920 68.3,1925.6" stroke="#484c57" stroke-width="3.2" fill="none" /><path d="M58.9,1935.8 L62.1,1939.2 L69.4,1932.2" stroke="#484c57" stroke-width="3.2" fill="none" /><circle cx="54.1" cy="2067.6" r="6.4" stroke="#484c57" stroke-width="3.2" fill="none"/><path d="M43.9,2091.4 Q43.9,2081 53.2,2080.8" stroke="#484c57" stroke-width="3.2" fill="none" /><circle cx="63.6" cy="2085.7" r="5" stroke="#484c57" stroke-width="3.2" fill="none"/><path d="M67.5,2089.8 L71.2,2093" stroke="#484c57" stroke-width="3.2" fill="none" /><path d="M548.6,180.7 H547.2 Q543.7,180.7 543.7,184.2 V198.7 Q543.7,202.2 547.2,202.2 H562 Q565.5,202.2 565.5,198.7 V196.9" stroke="#3f85de" stroke-width="3.3" fill="none" /><path d="M552.2,189.3 L566.4,175.1 a3.25,3.25 0 0 1 4.6,4.6 L556.9,194 H552.2 Z M563.7,178 L568.1,182.4" stroke="#3f85de" stroke-width="3.3" fill="none" /><circle cx="215.1" cy="501.9" r="5.3" stroke="#3c4562" stroke-width="2.1" fill="none"/><path d="M204.9,515.6 Q206.5,507.4 215.1,507.4 Q223.7,507.4 225.3,515.6" stroke="#3c4562" stroke-width="2.1" fill="none" /><circle cx="452.8" cy="507.2" r="10.6" stroke="#3c4562" stroke-width="2.2" fill="none"/><path d="M452.8,500.4 V507.4 L456.4,511" stroke="#3c4562" stroke-width="2.2" fill="none" /><circle cx="673.8" cy="506" r="11.1" stroke="#5d616c" stroke-width="2.2" fill="none"/><path d="M669.6,506.2 L672.7,508.8 L678.5,503.5" stroke="#5d616c" stroke-width="2.6" fill="none" /><path d="M797.34,500.25 Q801.98,495.84 808.06,496.00 Q810.03,496.30 810.03,498.50 Q809.88,504.20 805.24,508.16 M788.14,507.47 Q790.58,504.36 794.22,505.27 M790.12,509.83 Q795.14,510.66 796.81,514.54 Q792.10,517.28 787.99,517.28 Q787.69,513.32 790.12,509.83 Z M797.87,517.12 Q801.06,515.30 801.67,512.11" stroke="#5d616c" stroke-width="2.2" fill="none" /><circle cx="802.81" cy="502.53" r="1.9760000000000002" stroke="none" stroke-width="0" fill="#5d616c"/><path d="M787.08,494.78 L810.94,518.34" stroke="#5d616c" stroke-width="2.2" fill="none" /><rect x="2411.3" y="402.2" width="21.1" height="23.4" rx="3" stroke="#3a78f5" stroke-width="2.6"/><rect x="2416.4" y="407.4" width="11.3" height="4.2" rx="2" stroke="#3a78f5" stroke-width="2.3"/><circle cx="2416.6" cy="416.6" r="1.45" stroke="none" stroke-width="0" fill="#3a78f5"/><circle cx="2416.6" cy="420.6" r="1.45" stroke="none" stroke-width="0" fill="#3a78f5"/><circle cx="2422" cy="416.6" r="1.45" stroke="none" stroke-width="0" fill="#3a78f5"/><circle cx="2422" cy="420.6" r="1.45" stroke="none" stroke-width="0" fill="#3a78f5"/><circle cx="2427.3" cy="416.6" r="1.45" stroke="none" stroke-width="0" fill="#3a78f5"/><circle cx="2427.3" cy="420.6" r="1.45" stroke="none" stroke-width="0" fill="#3a78f5"/><path d="M2512,402 L2536.4,426 M2536.4,402 L2512,426" stroke="#8a9199" stroke-width="3.6" fill="none" /><path d="M2648.6,399.3 V424.6" stroke="#3f85de" stroke-width="3.3" fill="none" /><path d="M2657.9,411.9 H2676 M2668.4,404.3 L2676,411.9 L2668.4,419.5" stroke="#3f85de" stroke-width="3.3" fill="none" /><circle cx="2659.9" cy="503.9" r="14.8" stroke="#8e8e93" stroke-width="3.1" fill="none"/><path d="M2654.5,504.7 L2658.5,508.5 L2666,500.4" stroke="#8e8e93" stroke-width="3.4" fill="none" /><path d="M2785.90,495.80 Q2792.00,490.00 2800.00,490.20 Q2802.60,490.60 2802.60,493.50 Q2802.40,501.00 2796.30,506.20 M2773.80,505.30 Q2777.00,501.20 2781.80,502.40 M2776.40,508.40 Q2783.00,509.50 2785.20,514.60 Q2779.00,518.20 2773.60,518.20 Q2773.20,513.00 2776.40,508.40 Z M2786.60,518.00 Q2790.80,515.60 2791.60,511.40" stroke="#8e8e93" stroke-width="3.0" fill="none" /><circle cx="2793.1" cy="498.8" r="2.6" stroke="none" stroke-width="0" fill="#8e8e93"/><path d="M2772.40,488.60 L2803.80,519.60" stroke="#8e8e93" stroke-width="3.0" fill="none" /><circle cx="460.95" cy="1753.9" r="11.8" stroke="#3f85de" stroke-width="2.6" fill="none"/><path d="M457.65,1749.30 a3.7,3.7 0 1 1 5.6,3.1 c-1.7,1.1 -2.3,1.9 -2.3,3.7" stroke="#3f85de" stroke-width="2.7" fill="none" /><circle cx="460.95" cy="1760.6000000000001" r="1.7" stroke="none" stroke-width="0" fill="#3f85de"/><circle cx="949.5" cy="1753.9" r="11.8" stroke="#3f85de" stroke-width="2.6" fill="none"/><path d="M946.20,1749.30 a3.7,3.7 0 1 1 5.6,3.1 c-1.7,1.1 -2.3,1.9 -2.3,3.7" stroke="#3f85de" stroke-width="2.7" fill="none" /><circle cx="949.5" cy="1760.6000000000001" r="1.7" stroke="none" stroke-width="0" fill="#3f85de"/><circle cx="1788.8" cy="1753.9" r="11.8" stroke="#3f85de" stroke-width="2.6" fill="none"/><path d="M1785.50,1749.30 a3.7,3.7 0 1 1 5.6,3.1 c-1.7,1.1 -2.3,1.9 -2.3,3.7" stroke="#3f85de" stroke-width="2.7" fill="none" /><circle cx="1788.8" cy="1760.6000000000001" r="1.7" stroke="none" stroke-width="0" fill="#3f85de"/><path d="M2967.8,679.2 H3031.8 a10,10 0 0 1 10,10 V738.7 a10,10 0 0 1 -10,10 H2967.8 a10,10 0 0 1 -10,-10 V689.2 a10,10 0 0 1 10,-10 Z" fill="#e8e9ed" stroke="#2c66d8" stroke-width="2.7"/><path d="M2967.8,679.2 H3031.8 a10,10 0 0 1 10,10 V695.6 H2957.8 V689.2 a10,10 0 0 1 10,-10 Z" fill="#2c66d8" stroke="#2c66d8" stroke-width="2.7"/><circle cx="2968.4" cy="688.2" r="2.6" stroke="none" stroke-width="0" fill="#ffffff"/><circle cx="2976.5" cy="688.2" r="2.6" stroke="none" stroke-width="0" fill="#ffffff"/><circle cx="2984.5" cy="688.2" r="2.6" stroke="none" stroke-width="0" fill="#ffffff"/><path d="M3008.2,688.3 H3031.8" stroke="#ffffff" stroke-width="3" fill="none" /><rect x="3001.5" y="704.4" width="69.4" height="19.5" rx="4.5" fill="#ffffff" stroke="#2c66d8" stroke-width="2.7"/><path d="M3015.4,710.7 L3008.6,714.1 L3015.4,717.6 M3023.4,708.6 L3018.6,718.8 M3026.6,710.7 L3033.4,714.1 L3026.6,717.6 M3038.4,713.9 H3054.4 M3058.6,713.9 H3063.8" stroke="#2c66d8" stroke-width="2.1" fill="none" /><path d="M2945.6,752 V717.6 a3.6,3.6 0 0 1 3.6,-3.6 H2959.6 Q2961.8,714 2963,715.9 L2966.8,722.2 H2990 Q2994.6,722.2 2995,727 V740 Z" fill="#ffffff" stroke="#2c66d8" stroke-width="2.7"/><path d="M2944.3,750 V742 L2950,730.5 Q2952,726 2957,726 H2997.5 Q3004,726.6 3002.6,732.6 L2996,751 Q2994.4,755.7 2989.5,755.7 H2950 Q2944.3,755.7 2944.3,750 Z" fill="#2c66d8" stroke="none"/><path d="M2974.2,732.6 V749 M2966.2,740.8 H2982.2" stroke="#ffffff" stroke-width="3.6" fill="none" /></svg>
<svg width="3444" height="2154" viewBox="0 0 3444 2154" style="left:0;top:0;pointer-events:none;" fill="none" stroke-linecap="round" stroke-linejoin="round"><path d="M3367.8,2059 A9.7,9.7 0 1 1 3383.4,2067.9 C3378.6,2070.9 3376.6,2072.2 3376.6,2075.6" stroke="#ffffff" stroke-width="9" stroke-linecap="butt" fill="none"/><circle cx="3376.6" cy="2083.6" r="5.2" fill="#ffffff"/></svg>
<div class="a" style="left:2942px;top:22px;width:76px;height:40px;background:#a52318;border-radius:20px;"></div>
<span class="t" style="left:2951.00px;top:31.38px;font-size:22px;line-height:22px;color:#ffffff;font-weight:700;letter-spacing:0.839px;transform:scaleX(1.0900);transform-origin:0 0;">999+</span>
</div>
<script>(function(){var w=window.innerWidth;if(w&&Math.abs(w-3444)>2){var s=w/3444,r=document.getElementById('root');r.style.transformOrigin='0 0';r.style.transform='scale('+s+')';document.body.style.width=w+'px';document.body.style.height=(2154*s)+'px';}})();</script>
</body></html>
